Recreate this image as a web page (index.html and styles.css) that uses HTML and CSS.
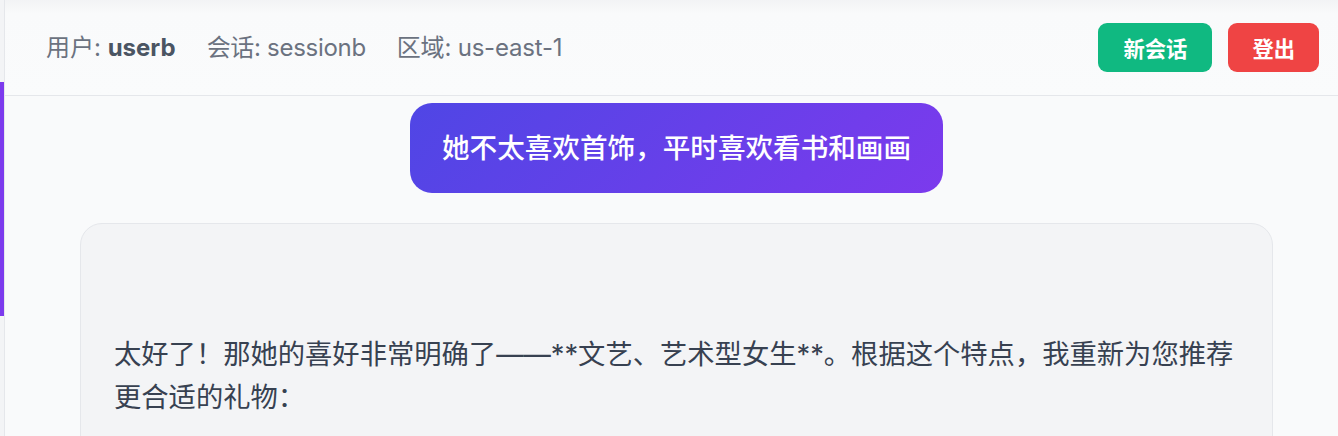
FILE: index.html
```html
<!DOCTYPE html>
<html lang="zh-CN">
<head>
<meta charset="utf-8">
<title>会话</title>
<link rel="stylesheet" href="styles.css">
</head>
<body>
<div class="app">
  <aside class="sidebar">
    <div class="active-item"></div>
  </aside>
  <main class="main">
    <header class="header">
      <div class="info">
        <span>用户: <strong>userb</strong></span>
        <span>会话: sessionb</span>
        <span>区域: us-east-1</span>
      </div>
      <div class="actions">
        <button class="btn btn-new">新会话</button>
        <button class="btn btn-logout">登出</button>
      </div>
    </header>
    <section class="chat">
      <div class="column">
        <div class="user-row">
          <div class="bubble">她不太喜欢首饰，平时喜欢看书和画画</div>
        </div>
        <div class="reply">
          <p class="reply-text">太好了！那她的喜好非常明确了——**文艺、艺术型女生**。根据这个特点，我重新为您推荐更合适的礼物：</p>
        </div>
      </div>
    </section>
  </main>
</div>
</body>
</html>
```

FILE: styles.css
```css
* { box-sizing: border-box; }
html, body { margin: 0; padding: 0; }
body {
  font-family: Inter, "Noto Sans CJK SC", sans-serif;
  background: #f9fafb;
  height: 436px;
  overflow: hidden;
}
.app {
  display: flex;
  height: 436px;
}
.sidebar {
  width: 5px;
  flex: none;
  background: #f3f4f6;
  border-right: 1px solid #e5e7eb;
}
.active-item {
  margin-top: 82px;
  height: 234px;
  width: 4px;
  background: #7c3aed;
}
.main {
  flex: 1;
  display: flex;
  flex-direction: column;
  min-width: 0;
}
.header {
  height: 96px;
  flex: none;
  display: flex;
  align-items: center;
  justify-content: space-between;
  padding: 0 19px 0 41px;
  background: linear-gradient(#f2f3f5 0, #f9fafb 14px, #fafbfc 100%);
  border-bottom: 1px solid #e5e7eb;
}
.info {
  display: flex;
  gap: 31px;
  font-size: 24px;
  color: #6b7280;
  line-height: 32px;
}
.info span:nth-child(2) { letter-spacing: -0.3px; }
.info span:nth-child(3) { letter-spacing: -0.2px; }
.info strong {
  font-weight: 700;
  color: #4b5563;
}
.actions {
  display: flex;
  gap: 16px;
  margin-bottom: 1px;
}
.btn {
  height: 49px;
  padding: 0 24px;
  border: none;
  border-radius: 9px;
  font-family: Inter, "Noto Sans CJK SC", sans-serif;
  font-size: 21.3px;
  font-weight: 700;
  color: #ffffff;
}
.btn-new { background: #10b981; padding: 0 25px; }
.btn-logout { background: #ef4444; }
.chat {
  flex: 1;
  padding-top: 7px;
  background: #f9fafb;
}
.column {
  margin-left: 75px;
  width: 1193px;
}
.user-row {
  display: flex;
  justify-content: center;
}
.bubble {
  padding: 24px 32px;
  line-height: 42px;
  font-size: 27.6px;
  font-weight: 500;
  color: #ffffff;
  border-radius: 22px;
  background: linear-gradient(135deg, #4f46e5 0%, #7c3aed 100%);
}
.reply {
  margin-top: 30px;
  background: #f3f4f6;
  border: 1px solid #e5e7eb;
  border-radius: 22px;
  padding: 109px 24px 40px 33px;
}
.reply-text {
  margin: 0;
  font-size: 27.3px;
  line-height: 43px;
  color: #374151;
}
```
